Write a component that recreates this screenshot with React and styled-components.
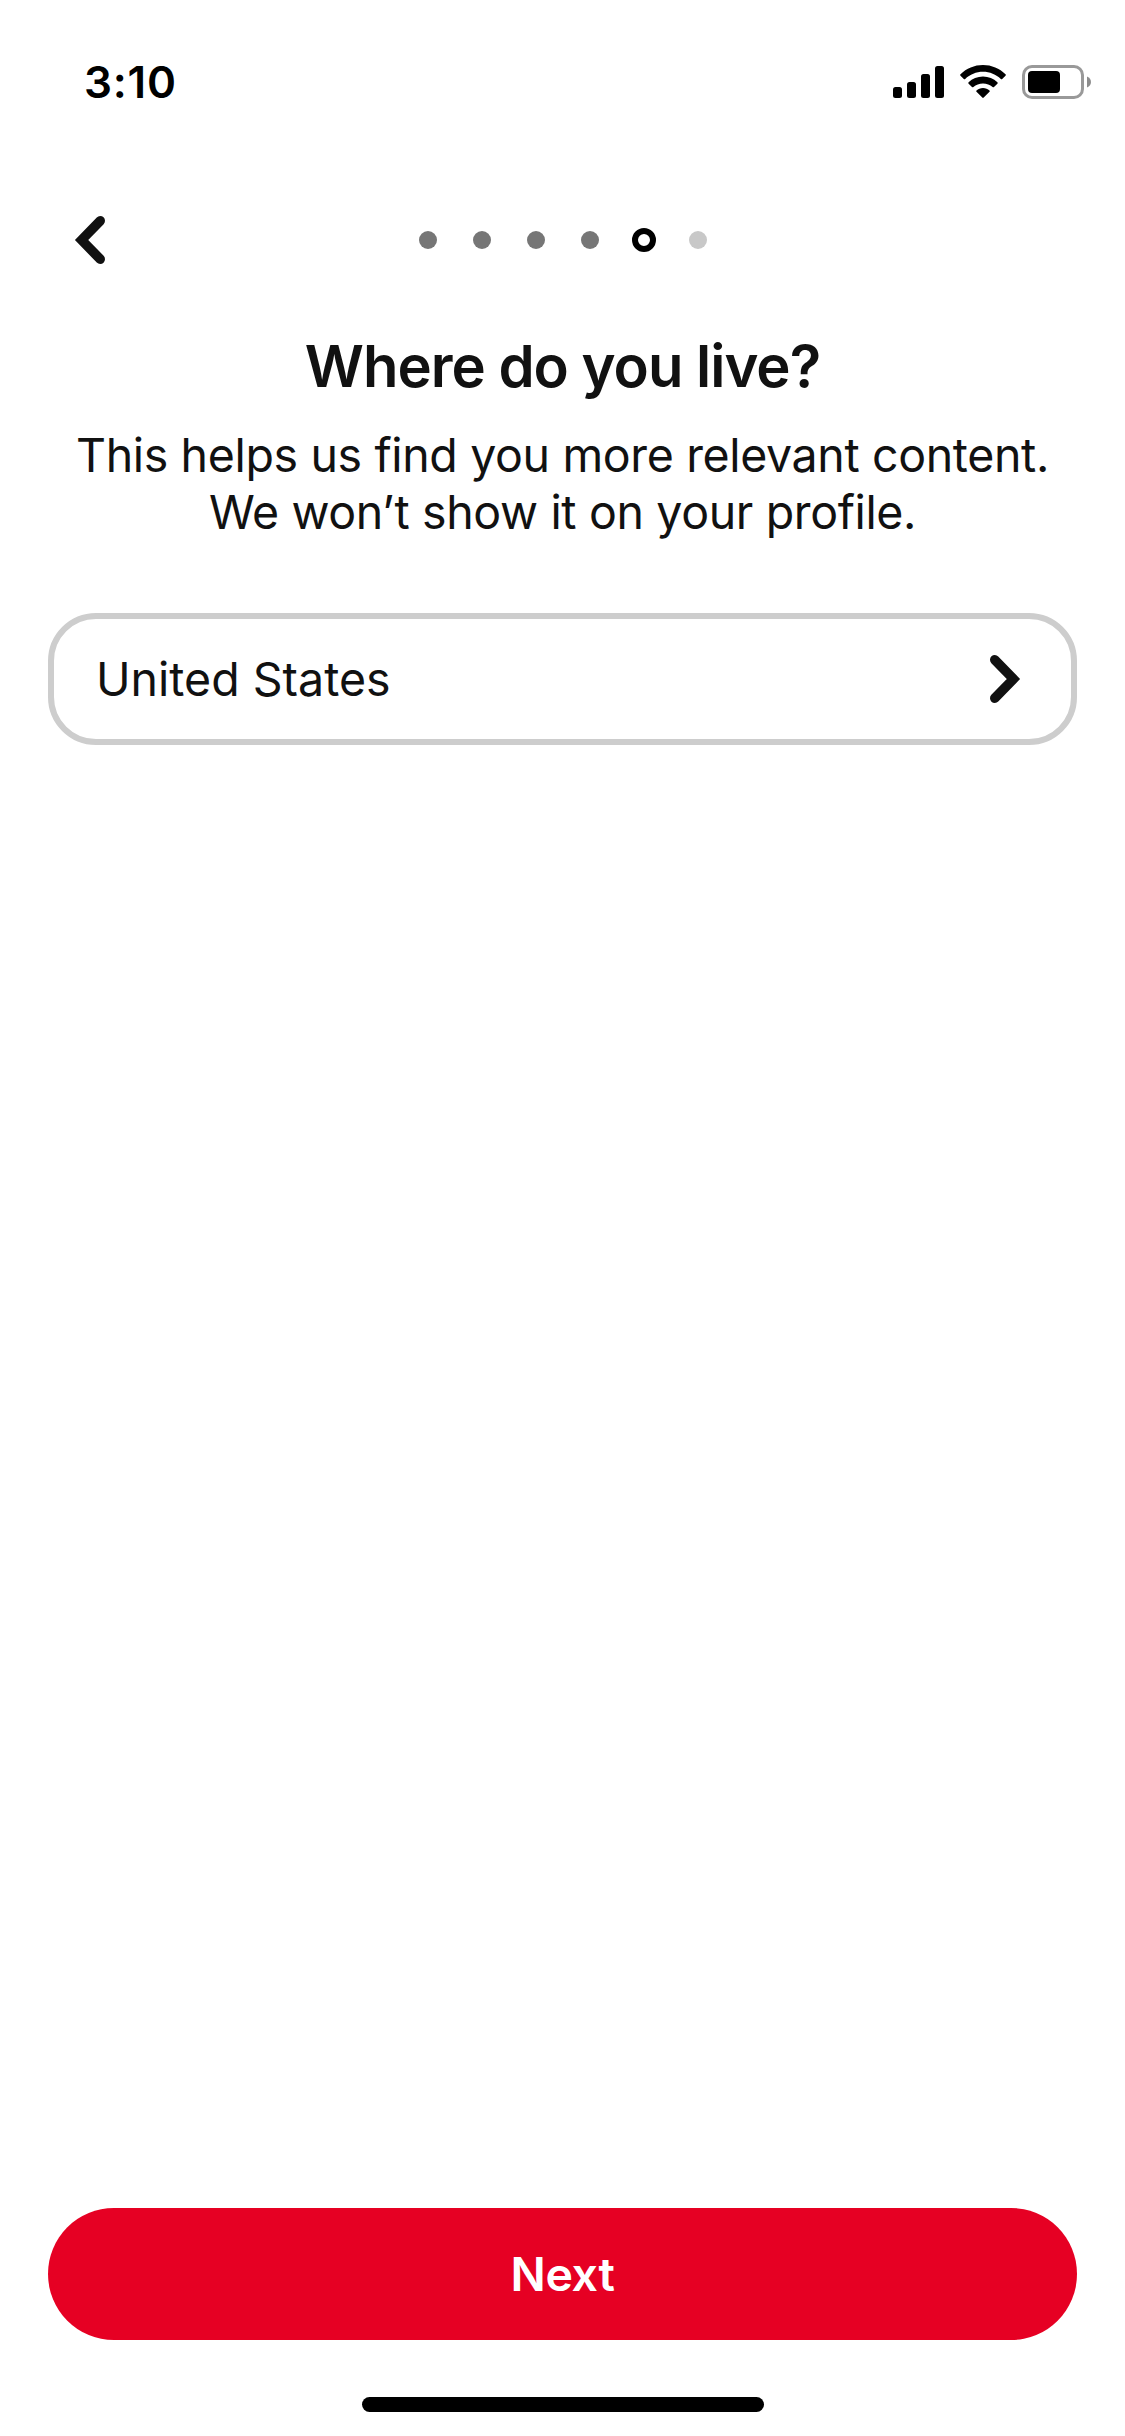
import React from 'react'
import styled, { createGlobalStyle } from 'styled-components'


const GlobalStyle = createGlobalStyle`
    *,
    *::before {
        box-sizing: border-box;
    }

    body {
        margin: 0;
        background: #fff;
        color: #111;
        font-family: Inter, "Liberation Sans", sans-serif;
    }
`

const Screen = styled.div`
    width: 1125px;
    height: 2436px;
    display: flex;
    flex-direction: column;
    background: #fff;
`

const StatusBar = styled.header`
    height: 164px;
    padding: 0 33px 0 84px;
    display: flex;
    align-items: center;
    justify-content: space-between;
    color: #000;
`

const Time = styled.span`
    font-size: 44px;
    font-weight: 600;
    line-height: 56px;
    letter-spacing: 0.8px;
`

const StatusIcons = styled.div`
    display: flex;
    align-items: center;
    gap: 16px;

    svg {
        display: block;
    }
`

const Navbar = styled.nav`
    height: 152px;
    padding: 0 72px;
    display: grid;
    grid-template-columns: 1fr auto 1fr;
    align-items: center;
`

const IconButton = styled.button`
    width: 36px;
    height: 54px;
    padding: 0;
    border: 0;
    background: none;

    svg {
        display: block;
    }
`

const Steps = styled.ol`
    margin: 0;
    padding: 0;
    display: flex;
    list-style: none;
`

const Step = styled.li`
    width: 54px;
    height: 24px;
    display: flex;
    align-items: center;
    justify-content: center;

    &::before {
        content: '';
        width: ${({ $state }) => ($state === 'current' ? 24 : 18)}px;
        height: ${({ $state }) => ($state === 'current' ? 24 : 18)}px;
        border: ${({ $state }) => ($state === 'current' ? '6px solid #000' : '0')};
        border-radius: 50%;
        background: ${({ $state }) => ({ done: '#767676', current: '#fff', next: '#c8c8c8' })[$state]};
    }
`

const Main = styled.main`
    flex: 1;
    padding: 14px 48px 0;
`

const Title = styled.h1`
    margin: 0 0 25px;
    font-size: 58px;
    font-weight: 600;
    line-height: 72px;
    letter-spacing: -1px;
    text-align: center;
    white-space: nowrap;
`

const Subtitle = styled.p`
    margin: 0 0 72px;
    font-size: 46.5px;
    line-height: 57px;
    letter-spacing: -0.36px;
    text-align: center;
    white-space: nowrap;
`

const CountryField = styled.button`
    width: 100%;
    height: 132px;
    padding: 0 48px 0 42px;
    display: flex;
    align-items: center;
    justify-content: space-between;
    border: 6px solid #cdcdcd;
    border-radius: 48px;
    background: #fff;
    color: inherit;
    font-family: inherit;
    font-size: 46.5px;
    line-height: 57px;
    letter-spacing: 0;
`

const Footer = styled.footer`
    padding: 0 48px 24px;
    display: flex;
    flex-direction: column;
    align-items: center;
    gap: 57px;
`

const NextButton = styled.button`
    width: 100%;
    height: 132px;
    border: 0;
    border-radius: 66px;
    background: #e60023;
    color: #fff;
    font-family: inherit;
    font-size: 46.5px;
    font-weight: 600;
    letter-spacing: -0.4px;
`

const HomeIndicator = styled.div`
    width: 402px;
    height: 15px;
    border-radius: 8px;
    background: #000;
`

const steps = ['done', 'done', 'done', 'done', 'current', 'next']

function SignalIcon() {
    return (
        <svg width="51" height="34" viewBox="0 0 51 34">
            <rect x="0" y="22" width="9" height="11" rx="2.5" />
            <rect x="14" y="17" width="9" height="16" rx="2.5" />
            <rect x="28" y="9" width="9" height="24" rx="2.5" />
            <rect x="42" y="1" width="9" height="32" rx="2.5" />
        </svg>
    )
}

function WifiIcon() {
    return (
        <svg width="46" height="34" viewBox="0 0 46 34">
            <path d="M23 0C31.600 0 39.600 3.400 45.500 9.300Q46.200 10 45.500 10.700L42.200 14Q41.500 14.700 40.800 14C36.100 9.400 29.800 6.800 23 6.800S9.900 9.400 5.200 14Q4.500 14.700 3.800 14L0.500 10.700Q-0.200 10 0.500 9.300C6.400 3.400 14.400 0 23 0Z" />
            <path d="M23 11.600C28.600 11.600 33.600 13.700 37.400 17.300Q38.100 18 37.400 18.700L34 22Q33.300 22.700 32.600 22C30 19.700 26.700 18.400 23 18.400S16 19.700 13.400 22Q12.700 22.700 12 22L8.600 18.700Q7.900 18 8.600 17.300C12.400 13.700 17.400 11.600 23 11.600Z" />
            <path d="M23 23C25.500 23 27.800 23.900 29.500 25.400Q30.200 26.100 29.500 26.800L23.700 32.600Q23 33.300 22.300 32.600L16.500 26.800Q15.800 26.100 16.500 25.400C18.200 23.900 20.500 23 23 23Z" />
        </svg>
    )
}

function BatteryIcon() {
    return (
        <svg width="70" height="34" viewBox="0 0 70 34">
            <rect x="1.500" y="1.500" width="59" height="31" rx="8.500" fill="none" stroke="#999" strokeWidth="3" />
            <rect x="6" y="6" width="32" height="22" rx="4" />
            <path d="M65 11.500C70.300 13.500 70.300 20.500 65 22.500Z" fill="#8c8c8c" />
        </svg>
    )
}

function Chevron({ left }) {
    return (
        <svg width="36" height="54" viewBox="0 0 36 54">
            <path
                d={left ? 'M28.200 7.800 9.600 27 28.200 46.200' : 'M7.800 7.800 26.400 27 7.800 46.200'}
                fill="none"
                stroke="#111"
                strokeWidth="9.6"
                strokeLinecap="round"
                strokeLinejoin="miter"
            />
        </svg>
    )
}

function App() {

    return (
        <Screen>
            <GlobalStyle />
            <StatusBar>
                <Time>3:10</Time>
                <StatusIcons>
                    <SignalIcon />
                    <WifiIcon />
                    <BatteryIcon />
                </StatusIcons>
            </StatusBar>
            <Navbar>
                <IconButton aria-label="Back">
                    <Chevron left />
                </IconButton>
                <Steps>
                    {steps.map((state, index) => (
                        <Step key={index} $state={state} />
                    ))}
                </Steps>
            </Navbar>
            <Main>
                <Title>Where do you live?</Title>
                <Subtitle>
                    This helps us find you more relevant content.
                    <br />
                    We won’t show it on your profile.
                </Subtitle>
                <CountryField>
                    <span>United States</span>
                    <Chevron />
                </CountryField>
            </Main>
            <Footer>
                <NextButton>Next</NextButton>
                <HomeIndicator />
            </Footer>
        </Screen>
    )
}

export default App
